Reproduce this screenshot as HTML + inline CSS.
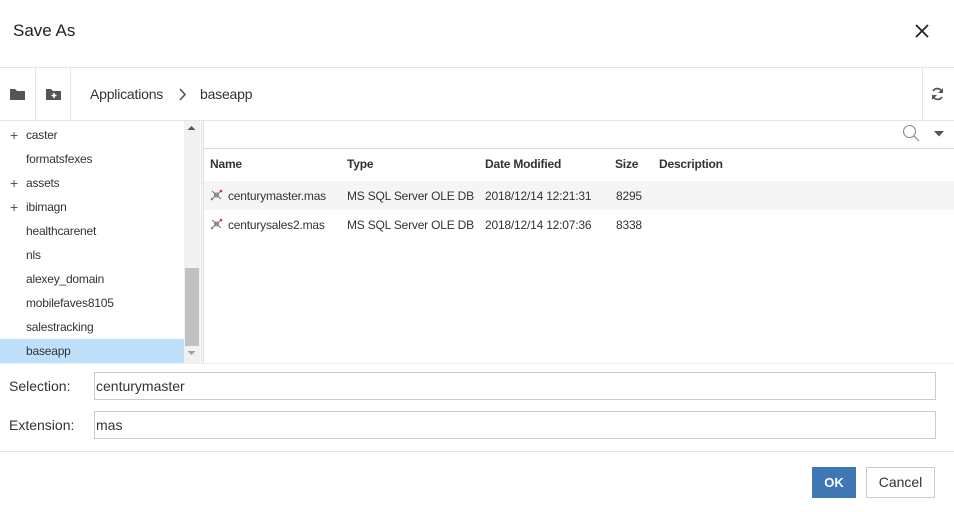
<!DOCTYPE html>
<html><head><style>
*{margin:0;padding:0;box-sizing:border-box}
body{width:954px;height:512px;background:#fff;font-family:"Liberation Sans",sans-serif;color:#333;position:relative;overflow:hidden;font-size:12px}
.a{position:absolute}
.t{position:absolute;white-space:nowrap}
.r .t,.tree{letter-spacing:-0.2px}
.hl{position:absolute;height:1px;background:#e6e6e6}
.vl{position:absolute;width:1px;background:#e6e6e6}
.tree div{position:absolute;left:0;width:184px;height:24px;line-height:24px;padding-left:26px;font-size:12px;color:#333}
.tree span{position:absolute;left:10px;font-size:14px;color:#555}
.th{font-weight:bold;font-size:12px;color:#333}
.inp{position:absolute;left:94px;width:842px;height:28px;border:1px solid #ccc;font-size:14px;line-height:26px;padding-left:1px;color:#333}
</style></head><body>
<div class="t" style="left:13px;top:21px;font-size:17px;color:#222">Save As</div>
<svg class="a" style="left:914px;top:23px" width="16" height="16"><path d="M2 2L14 14M14 2L2 14" stroke="#222" stroke-width="1.8"/></svg>
<div class="hl" style="left:0;top:67px;width:954px"></div>
<div class="vl" style="left:35px;top:68px;height:52px"></div>
<div class="vl" style="left:70px;top:68px;height:52px"></div>
<div class="vl" style="left:922px;top:68px;height:52px"></div>
<svg class="a" style="left:10px;top:88px" width="15" height="12"><path d="M0 1h5l2 2h8v9H0z" fill="#555"/></svg>
<svg class="a" style="left:46px;top:88px" width="15" height="12"><path d="M0 1h5l2 2h8v9H0z" fill="#555"/><path d="M8 5v5M5.5 7.5h5" stroke="#fff" stroke-width="1.6"/></svg>
<div class="t" style="left:90px;top:86px;font-size:14px;color:#333;letter-spacing:-0.2px">Applications</div>
<svg class="a" style="left:178px;top:88px" width="10" height="13"><path d="M2 1l5 5.5L2 12" stroke="#555" stroke-width="1.6" fill="none"/></svg>
<div class="t" style="left:200px;top:86px;font-size:14px;color:#333;letter-spacing:-0.2px">baseapp</div>
<svg class="a" style="left:930px;top:86px" width="15" height="16" viewBox="0 0 15 16"><path d="M12 6A5 5 0 0 0 3 5M3 10a5 5 0 0 0 9 1" stroke="#555" stroke-width="1.7" fill="none"/><path d="M13 2v5H8z M2 14V9h5z" fill="#555"/></svg>
<div class="hl" style="left:0;top:120px;width:954px"></div>
<div class="tree">
<div style="top:123px"><span>+</span>caster</div>
<div style="top:147px">formatsfexes</div>
<div style="top:171px"><span>+</span>assets</div>
<div style="top:195px"><span>+</span>ibimagn</div>
<div style="top:219px">healthcarenet</div>
<div style="top:243px">nls</div>
<div style="top:267px">alexey_domain</div>
<div style="top:291px">mobilefaves8105</div>
<div style="top:315px">salestracking</div>
<div style="top:339px;background:#bfe0fc;line-height:25px">baseapp</div>
</div>
<div class="a" style="left:184px;top:121px;width:16px;height:242px;background:#f1f1f1"></div>
<div class="a" style="left:185px;top:268px;width:14px;height:78px;background:#c1c1c1"></div>
<svg class="a" style="left:187px;top:125px" width="9" height="6"><path d="M0.5 5L4.5 1l4 4z" fill="#555"/></svg>
<svg class="a" style="left:187px;top:350px" width="9" height="6"><path d="M0.5 1h8L4.5 5z" fill="#a0a0a0"/></svg>
<div class="a" style="left:201px;top:121px;width:3px;height:242px;border-left:1px solid #ddd;border-right:1px solid #ddd"></div>
<svg class="a" style="left:902px;top:124px" width="18" height="18"><circle cx="7.5" cy="7.5" r="6" stroke="#888" stroke-width="1.1" fill="none"/><path d="M12 12l5 5" stroke="#888" stroke-width="1.2"/></svg>
<svg class="a" style="left:934px;top:131px" width="10" height="6"><path d="M0 0h10L5 5.5z" fill="#555"/></svg>
<div class="hl" style="left:204px;top:148px;width:750px;background:#d6d6d6"></div>
<div class="r">
<div class="t th" style="left:210px;top:157px">Name</div>
<div class="t th" style="left:347px;top:157px">Type</div>
<div class="t th" style="left:485px;top:157px">Date Modified</div>
<div class="t th" style="left:615px;top:157px">Size</div>
<div class="t th" style="left:659px;top:157px">Description</div>
<div class="a" style="left:204px;top:181px;width:750px;height:29px;background:#f5f5f5"></div>
<svg class="a" style="left:210px;top:189px" width="13" height="12"><path d="M2 2l9 8M11 2L2 10" stroke="#777" stroke-width="1"/><circle cx="6.5" cy="6" r="2" fill="none" stroke="#777"/><circle cx="11" cy="2" r="1.3" fill="#d33"/><circle cx="2" cy="10" r="1.3" fill="#6a4"/></svg>
<div class="t" style="left:228px;top:189px">centurymaster.mas</div>
<div class="t" style="left:347px;top:189px">MS SQL Server OLE DB</div>
<div class="t" style="left:485px;top:189px">2018/12/14 12:21:31</div>
<div class="t" style="left:616px;top:189px">8295</div>
<svg class="a" style="left:210px;top:218px" width="13" height="12"><path d="M2 2l9 8M11 2L2 10" stroke="#777" stroke-width="1"/><circle cx="6.5" cy="6" r="2" fill="none" stroke="#777"/><circle cx="11" cy="2" r="1.3" fill="#d33"/><circle cx="2" cy="10" r="1.3" fill="#6a4"/></svg>
<div class="t" style="left:228px;top:218px">centurysales2.mas</div>
<div class="t" style="left:347px;top:218px">MS SQL Server OLE DB</div>
<div class="t" style="left:485px;top:218px">2018/12/14 12:07:36</div>
<div class="t" style="left:616px;top:218px">8338</div>
</div>
<div class="hl" style="left:0;top:363px;width:954px;background:#eee"></div>
<div class="t" style="left:9px;top:378px;font-size:14px">Selection:</div>
<div class="inp" style="top:372px">centurymaster</div>
<div class="t" style="left:9px;top:417px;font-size:14px">Extension:</div>
<div class="inp" style="top:411px">mas</div>
<div class="hl" style="left:0;top:451px;width:954px"></div>
<div class="a" style="left:812px;top:467px;width:44px;height:31px;background:#3f77b5;color:#fff;font-weight:bold;font-size:13px;line-height:31px;text-align:center">OK</div>
<div class="a" style="left:866px;top:467px;width:69px;height:31px;border:1px solid #ccc;color:#333;font-size:14px;line-height:29px;text-align:center">Cancel</div>
</body></html>
